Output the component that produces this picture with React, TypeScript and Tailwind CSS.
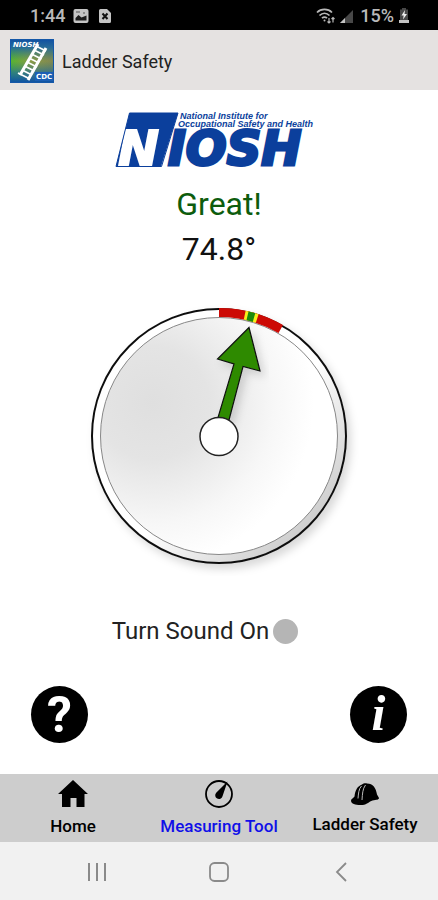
import { useState } from 'react';
import type { ReactNode } from 'react';

const StatusBar = () => (
  <div className="flex h-[30px] items-center justify-between bg-black pt-px pr-7 pl-[30px] text-[18px] font-medium text-[#b9b9b9]">
    <div className="flex items-center">
      <span>1:44</span>
      <svg className="ml-2 h-4 w-4" viewBox="0 0 16 16" aria-hidden="true">
        <rect x="0.5" y="1" width="15" height="14" rx="2" fill="#c4c4c4" />
        <path d="M2.5 12.5V10l3-3 3 2.5 5-2v5z" fill="#1c1c1c" />
        <path d="M3 4h4M10 5h2" stroke="#555" strokeWidth="1.2" />
      </svg>
      <svg className="ml-2 h-4 w-4" viewBox="0 0 16 16" aria-hidden="true">
        <path d="M3.5 1H10l4 4v8.500a1.500 1.500 0 0 1-1.500 1.500h-9A1.500 1.500 0 0 1 2 13.500v-11A1.500 1.500 0 0 1 3.500 1z" fill="#c4c4c4" />
        <path d="M5.500 5.500l5 5.500M10.500 5.500l-5 5.500" stroke="#111" strokeWidth="2" />
      </svg>
    </div>
    <div className="flex items-center">
      <svg className="h-4 w-5" viewBox="0 0 20 16" fill="none" stroke="#b9b9b9" aria-hidden="true">
        <path d="M1 4.500C5 .4 12 .4 16 4.500M3.500 7.500c3-3 7-3 10 0M6 10.200c1.500-1.400 3.500-1.400 5 0" strokeWidth="1.700" />
        <circle cx="8.500" cy="12.500" r="1" fill="#b9b9b9" stroke="none" />
        <path d="M13 10v5M11.500 13.500L13 15l1.500-1.500M17 14.500V9.500M15.500 11L17 9.500l1.500 1.500" strokeWidth="1.200" />
      </svg>
      <svg className="ml-1 h-4 w-3.5" viewBox="0 0 14 16" aria-hidden="true">
        <path d="M0 15L13 2v13z" fill="#484848" />
        <path d="M0 15l5-5v5z" fill="#c4c4c4" />
      </svg>
      <span className="ml-1.5">15%</span>
      <svg className="ml-1 h-4 w-3" viewBox="0 0 12 16" aria-hidden="true">
        <path d="M4 0h4v1.500h2V12H2V1.500h2z" fill="#484848" />
        <path d="M7 2L3.500 7.500h2.200L5 11.500 9 6H6.500z" fill="#eee" />
        <path d="M1 12h10v3H1z" fill="#c4c4c4" />
      </svg>
    </div>
  </div>
);

const AppIcon = () => (
  <svg className="h-11 w-11" viewBox="0 0 44 44" aria-hidden="true">
    <defs>
      <linearGradient id="sky" x1="0" y1="0" x2="1" y2="0">
        <stop offset="0" stopColor="#55b52f" />
        <stop offset="0.5" stopColor="#8d9b46" />
        <stop offset="1" stopColor="#7f8652" />
      </linearGradient>
      <linearGradient id="shade" x1="0" y1="0" x2="0" y2="1">
        <stop offset="0" stopColor="#0f4fa3" />
        <stop offset="0.2" stopColor="#1f68a0" stopOpacity="0.9" />
        <stop offset="0.5" stopColor="#2f7d7a" stopOpacity="0" />
        <stop offset="0.75" stopColor="#1265a8" stopOpacity="0.6" />
        <stop offset="1" stopColor="#0b4fa6" />
      </linearGradient>
    </defs>
    <rect width="44" height="44" fill="url(#sky)" />
    <rect width="44" height="44" fill="url(#shade)" />
    <rect x="0.500" y="0.500" width="43" height="43" fill="none" stroke="#1558a8" />
    <text x="3" y="8" fontSize="7" fill="#fff" className="font-['DejaVu_Sans'] font-bold italic">NIOSH</text>
    <path d="M28 5L10 36M36 9L18 41" stroke="#fff" strokeWidth="3" />
    <path d="M26 7l10 5M24 11l10 5M21.500 15l10 5M19 19l10 5M17 23l10 5M14.500 27l10 5M12 31l10 5M8 34l12 6" stroke="#fff" strokeWidth="1.800" />
    <path d="M25 33h18v9H25z" fill="#1c5fb4" />
    <text x="26" y="40" fontSize="7" fill="#fff" className="font-['DejaVu_Sans'] font-bold">CDC</text>
  </svg>
);

const NioshLogo = () => (
  <svg className="h-[70px] w-[208px]" viewBox="0 0 208 70" role="img" aria-label="NIOSH">
    <path d="M14.500 1H63L46 54.500H1z" fill="#0b3f9c" />
    <text x="3" y="54" fontSize="49" fill="#fff" stroke="#fff" strokeWidth="2" className="font-['DejaVu_Sans'] font-bold italic">N</text>
    <path d="M14.500 1H63L46.500 54.500H1z" fill="none" stroke="#0b3f9c" />
    <text x="53" y="53" fontSize="48" fill="#0b3f9c" stroke="#0b3f9c" strokeWidth="3" className="font-['DejaVu_Sans'] font-bold italic">IOSH</text>
    <g fill="#0b3f9c" className="font-['Liberation_Sans'] font-bold italic">
      <text x="65" y="7" fontSize="9">National Institute for</text>
      <text x="63" y="15" fontSize="9">Occupational Safety and Health</text>
    </g>
  </svg>
);

// dial is centred on 140,140
const Dial = () => (
  <svg className="h-[280px] w-[280px]" viewBox="0 0 280 280" role="img" aria-label="Ladder angle">
    <defs>
      <radialGradient id="face" cx="0.22" cy="0.36" r="0.68">
        <stop offset="0" stopColor="#dfdfdf" />
        <stop offset="0.35" stopColor="#e4e4e4" />
        <stop offset="0.75" stopColor="#f7f7f7" />
        <stop offset="1" stopColor="#fff" />
      </radialGradient>
      <linearGradient id="rim" x1="0" y1="0" x2="1" y2="1">
        <stop offset="0.55" stopColor="#fff" />
        <stop offset="0.85" stopColor="#cfcfcf" />
      </linearGradient>
      <filter id="drop" x="-20%" y="-20%" width="140%" height="140%">
        <feDropShadow dx="4" dy="5" stdDeviation="4" floodOpacity="0.15" />
      </filter>
    </defs>
    <circle cx="140" cy="140" r="127" fill="url(#rim)" stroke="#111" strokeWidth="2" filter="url(#drop)" />
    <circle cx="140" cy="140" r="118.500" fill="url(#face)" stroke="#888" />
    <g fill="none" strokeWidth="9">
      <path d="M140 16.500A123.500 123.500 0 0 1 201.750 33" stroke="#cc0a05" />
      <path d="M165.700 19.200A123.500 123.500 0 0 1 178.200 22.500" stroke="#f7ee1c" />
      <path d="M168.500 19.900A123.500 123.500 0 0 1 175 21.600" stroke="#1c8a0c" />
    </g>
    <path
      d="M170 31.500L181 75l-17-4.500L150 124 139 121.500 155 68 138.500 63z"
      fill="#2f8a00"
      stroke="#111"
      strokeWidth="1.200"
      filter="url(#drop)"
    />
    <circle cx="140" cy="140.500" r="19" fill="#fff" stroke="#222" strokeWidth="1.500" />
  </svg>
);

const HomeIcon = () => (
  <svg className="h-7 w-[30px]" viewBox="0 0 30 28" aria-hidden="true">
    <path d="M15 0L30 14h-3.500v13H18.500v-9h-6v9H4V14H0z" />
  </svg>
);

const MeterIcon = () => (
  <svg className="h-7 w-[30px]" viewBox="0 0 30 28" aria-hidden="true">
    <circle cx="15" cy="14" r="13" fill="none" stroke="#000" strokeWidth="1.800" />
    <path d="M23.500 1.500L18.500 16.200a3.700 3.700 0 1 1-6.300-3.400z" />
  </svg>
);

const HatIcon = () => (
  <svg className="h-[26px] w-[30px]" viewBox="0 0 30 26" aria-hidden="true">
    <path d="M1 20.500c.3-1.800 2.500-2.500 3.500-4C5 10.500 7.500 6 12 4.500c1-1 3.500-1.500 5-1 6 0 9 4.500 10 11l2 3.500c-.3 2-2.500 1.500-6.500 2.500-3.500 1-5 4-10 4.500-5 .5-11.500-.5-11.500-4.500z" />
    <path d="M11.500 6C8.500 9 8.500 14 8 18.500M15.500 5C12.500 9 12.500 14 12 20" fill="none" stroke="#bbb" strokeWidth="1" />
  </svg>
);

interface TabProps {
  icon: ReactNode;
  label: string;
  active?: boolean;
}

const Tab = ({ icon, label, active }: TabProps) => (
  <a
    href="#"
    aria-current={active ? 'page' : undefined}
    className={`flex flex-col items-center gap-2 pt-1.5 text-[17px] leading-5 font-medium ${active ? 'text-[#1010e8]' : 'text-black'}`}
  >
    {icon}
    <span>{label}</span>
  </a>
);

const SystemNav = () => (
  <div className="grid h-[58px] grid-cols-3 place-items-center bg-[#f1f1f1] px-9 pt-0.5 text-[#8a8a8a]">
    <button type="button" aria-label="Recent apps">
      <svg className="h-5 w-5" viewBox="0 0 20 20" stroke="currentColor" strokeWidth="2">
        <path d="M2 1v18M10 1v18M18 1v18" />
      </svg>
    </button>
    <button type="button" aria-label="Home screen">
      <svg className="h-5 w-5" viewBox="0 0 20 20" fill="none" stroke="currentColor" strokeWidth="1.800">
        <rect x="1" y="1" width="18" height="18" rx="4.500" />
      </svg>
    </button>
    <button type="button" aria-label="Back">
      <svg className="h-5 w-5" viewBox="0 0 20 20" fill="none" stroke="currentColor" strokeWidth="1.800">
        <path d="M15 1L6 10l9 9" />
      </svg>
    </button>
  </div>
);

const App = () => {
  const [sound, setSound] = useState(false);

  return (
    <div className="flex min-h-screen flex-col bg-white font-[Roboto,sans-serif] text-black">
      <StatusBar />
      <header className="flex h-[60px] items-center gap-2 bg-[#e5e2e1] px-2.5 pt-0.5">
        <AppIcon />
        <h1 className="text-[18px] text-[#222]">Ladder Safety</h1>
      </header>

      <main className="flex flex-1 flex-col items-center pt-[22px]">
        <NioshLogo />
        <p className="text-[32px] leading-[44px] text-[#0d5c0d]">Great!</p>
        <p className="text-[32px] leading-[46px] text-[#111]">74.8°</p>
        <div className="mt-6">
          <Dial />
        </div>
        <label className="mt-10 mr-7 flex items-center gap-1 text-[24px] leading-[30px] text-[#222]">
          Turn Sound On
          <input
            type="checkbox"
            checked={sound}
            onChange={() => setSound(!sound)}
            className="h-[25px] w-[25px] appearance-none rounded-full bg-[#b5b5b5] checked:bg-green-700"
          />
        </label>
        <div className="mt-10 flex w-full justify-between px-[31px] pb-[30px]">
          <button type="button" aria-label="Help" className="flex h-[57px] w-[57px] items-center justify-center rounded-full bg-black text-[50px] leading-none font-bold text-white">
            ?
          </button>
          <button type="button" aria-label="Information" className="flex h-[57px] w-[57px] items-center justify-center rounded-full bg-black pb-1 font-['Liberation_Serif',serif] text-[50px] leading-none font-bold text-white italic">
            i
          </button>
        </div>
      </main>

      <nav className="grid h-[68px] grid-cols-3 bg-[#cdcdcd]">
        <Tab icon={<HomeIcon />} label="Home" />
        <Tab icon={<MeterIcon />} label="Measuring Tool" active />
        <Tab icon={<HatIcon />} label="Ladder Safety" />
      </nav>
      <SystemNav />
    </div>
  );
};

export default App;
